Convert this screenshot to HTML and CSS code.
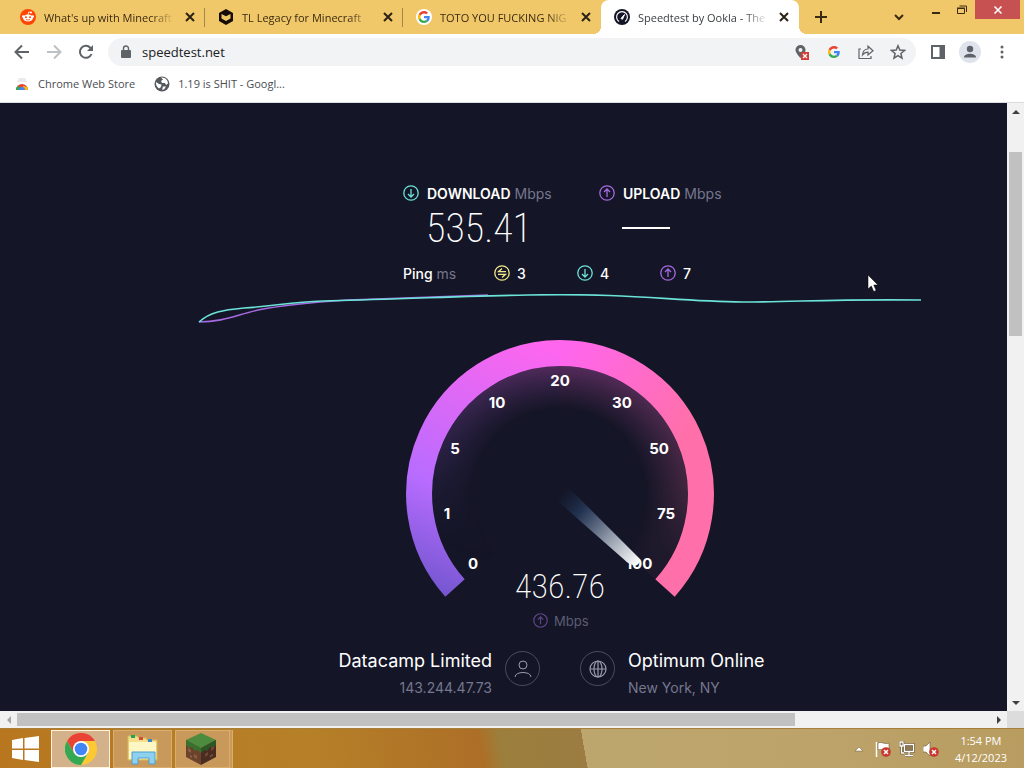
FILE: index.html
```
<!DOCTYPE html>
<html lang="en">
<head>
    <meta charset="UTF-8">
    <meta name="viewport" content="width=device-width, initial-scale=1.0">
    <title>Speedtest by Ookla</title>
    <link rel="stylesheet" href="styles.css">
</head>
<body>
    <!-- Shared icons -->
    <svg class="sprite" aria-hidden="true">
        <symbol id="i-close" viewBox="0 0 16 16"><path d="M4 4l8 8M12 4l-8 8" stroke="currentColor" stroke-width="2" fill="none"/></symbol>
        <symbol id="i-google" viewBox="0 0 48 48">
            <path fill="#ea4335" d="M24 9.500c3.500 0 6.700 1.200 9.200 3.600l6.900-6.900C35.900 2.400 30.500 0 24 0 14.600 0 6.500 5.400 2.600 13.200l8 6.200C12.400 13.700 17.700 9.500 24 9.500z"/>
            <path fill="#4285f4" d="M47 24.500c0-1.600-.2-3.100-.4-4.500H24v9h12.900c-.6 3-2.200 5.500-4.800 7.200l7.700 6C44.400 38 47 31.800 47 24.500z"/>
            <path fill="#fbbc05" d="M10.500 28.600A14.500 14.500 0 0 1 10.500 19.400l-8-6.200a24 24 0 0 0 0 21.600z"/>
            <path fill="#34a853" d="M24 48c6.500 0 11.900-2.100 15.900-5.800l-7.700-6c-2.200 1.500-4.900 2.300-8.200 2.300-6.300 0-11.600-4.200-13.500-9.900l-8 6.200C6.500 42.600 14.600 48 24 48z"/>
        </symbol>
        <symbol id="i-down" viewBox="0 0 16 16"><g fill="none" stroke="currentColor" stroke-width="1.300"><circle cx="8" cy="8" r="7.200"/><path d="M8 4v8M5 9l3 3 3-3"/></g></symbol>
        <symbol id="i-up" viewBox="0 0 16 16"><g fill="none" stroke="currentColor" stroke-width="1.300"><circle cx="8" cy="8" r="7.200"/><path d="M8 12V4M5 7l3-3 3 3"/></g></symbol>
        <symbol id="i-idle" viewBox="0 0 16 16"><g fill="none" stroke="currentColor" stroke-width="1.300"><circle cx="8" cy="8" r="7.200"/><path d="M12 6.700H4.500L8 3.500M4 9.300h7.500L8 12.500"/></g></symbol>
        <symbol id="i-error" viewBox="0 0 10 10"><circle cx="5" cy="5" r="4.800" fill="#c9372c"/><path d="M3 3l4 4M7 3L3 7" stroke="#fff" stroke-width="1.500"/></symbol>
    </svg>

    <!-- Tab strip -->
    <header class="tab-strip">
        <div class="tab">
            <svg class="icon" viewBox="0 0 16 16"><circle cx="8" cy="8" r="8" fill="#ff4500"/><ellipse cx="8" cy="9" rx="5" ry="3.500" fill="#fff"/><circle cx="3.300" cy="7.600" r="1.300" fill="#fff"/><circle cx="12.700" cy="7.600" r="1.300" fill="#fff"/><circle cx="11" cy="3.500" r="1" fill="#fff"/><path d="M8 6l.6-3 2.400.5" stroke="#fff" stroke-width=".8" fill="none"/><circle cx="6" cy="8.300" r="1" fill="#ff4500"/><circle cx="10" cy="8.300" r="1" fill="#ff4500"/><path d="M6 10.500q2 1.200 4 0" stroke="#ff4500" stroke-width=".8" fill="none"/></svg>
            <span class="tab-title">What's up with Minecraft</span>
            <button class="tab-close" aria-label="Close tab"><svg class="icon"><use href="#i-close"/></svg></button>
        </div>
        <div class="tab">
            <svg class="icon" viewBox="0 0 16 16"><path fill="#170d08" d="M8 0l7 4v8l-7 4-7-4V4z"/><path fill="#f0c765" d="M3.500 5L8 7.300 12.500 5v4.500L8 12l-4.500-2.500z"/></svg>
            <span class="tab-title">TL Legacy for Minecraft</span>
            <button class="tab-close" aria-label="Close tab"><svg class="icon"><use href="#i-close"/></svg></button>
        </div>
        <div class="tab">
            <span class="icon google-badge"><svg viewBox="0 0 48 48"><use href="#i-google"/></svg></span>
            <span class="tab-title">TOTO YOU FUCKING NIG</span>
            <button class="tab-close" aria-label="Close tab"><svg class="icon"><use href="#i-close"/></svg></button>
        </div>
        <div class="tab active">
            <svg class="icon" viewBox="0 0 16 16"><circle cx="8" cy="8" r="8" fill="#141526"/><path d="M5 12.500A5.400 5.400 0 1 1 11 12.500" fill="none" stroke="#fff" stroke-width="1.200"/><path d="M7 9.500l3.500-4-2 4.700z" fill="#fff" stroke="#fff"/></svg>
            <span class="tab-title">Speedtest by Ookla - The</span>
            <button class="tab-close" aria-label="Close tab"><svg class="icon"><use href="#i-close"/></svg></button>
        </div>
        <button class="new-tab" aria-label="New tab"><svg class="icon" viewBox="0 0 16 16"><path d="M8 2v12M2 8h12" stroke="currentColor" stroke-width="2"/></svg></button>
        <div class="window-controls">
            <button class="search-tabs" aria-label="Search tabs"><svg class="icon" viewBox="0 0 16 16"><path d="M4 6l4 4 4-4" fill="none" stroke="currentColor" stroke-width="2"/></svg></button>
            <button aria-label="Minimize"><svg viewBox="0 0 12 12"><path d="M2 9h8" stroke="currentColor" stroke-width="2"/></svg></button>
            <button aria-label="Restore"><svg viewBox="0 0 12 12"><path d="M1.500 4.500h7v5h-7zM1 4h8M3.500 2h7v6" fill="none" stroke="currentColor"/></svg></button>
            <button class="window-close" aria-label="Close"><svg viewBox="0 0 12 12"><path d="M2.500 2.500l7 7M9.500 2.500l-7 7" stroke="currentColor" stroke-width="1.600"/></svg></button>
        </div>
    </header>

    <!-- Toolbar -->
    <nav class="toolbar">
        <button aria-label="Back"><svg class="icon" viewBox="0 0 16 16"><path d="M15 8H2M8 1.500L1.500 8 8 14.500" fill="none" stroke="currentColor" stroke-width="2"/></svg></button>
        <button class="disabled" aria-label="Forward"><svg class="icon" viewBox="0 0 16 16"><path d="M1 8h13M8 1.500L14.500 8 8 14.500" fill="none" stroke="currentColor" stroke-width="2"/></svg></button>
        <button aria-label="Reload"><svg class="icon" viewBox="0 0 16 16"><path d="M13.500 10A6 6 0 1 1 12.300 3.700L14 5.500" fill="none" stroke="currentColor" stroke-width="2"/><path d="M15 1v6H9z" fill="currentColor"/></svg></button>
        <div class="address">
            <svg class="icon" viewBox="0 0 16 16"><rect x="3" y="6" width="10" height="8" rx="1" fill="currentColor"/><path d="M5.500 7V4.500a2.500 2.500 0 0 1 5 0V7" fill="none" stroke="currentColor" stroke-width="1.400"/></svg>
            <input type="text" aria-label="Address" value="speedtest.net">
            <button aria-label="Location blocked"><svg class="icon" viewBox="0 0 16 16"><path d="M6.500 1a5 5 0 0 1 5 5c0 3-5 8-5 8s-5-5-5-8a5 5 0 0 1 5-5z" fill="#5f6368"/><circle cx="6.500" cy="6" r="2" fill="#f1f3f4"/><path d="M7 8h8v8H7z" fill="#d13c36"/><path d="M9 10l4 4M13 10l-4 4" stroke="#fff" stroke-width="1.300"/></svg></button>
            <button aria-label="Google"><svg class="icon google-small"><use href="#i-google"/></svg></button>
            <button aria-label="Share"><svg class="icon" viewBox="0 0 16 16"><path d="M3 5H1v9.500h12V12M4.500 11c.3-4 2-6 5.500-6V2.200L15 6.700 10 11V8.200c-2.500 0-4 .8-5.500 2.800z" fill="none" stroke="currentColor" stroke-width="1.200"/></svg></button>
            <button aria-label="Bookmark"><svg class="icon" viewBox="0 0 16 16"><path d="M8 1.800l1.800 4.300 4.700.4-3.600 3 1.100 4.600L8 11.700l-4 2.400 1.100-4.600-3.600-3 4.700-.4z" fill="none" stroke="currentColor" stroke-width="1.500"/></svg></button>
        </div>
        <button aria-label="Side panel"><svg class="icon" viewBox="0 0 16 16"><path d="M2 2h12v12H2z" fill="none" stroke="currentColor" stroke-width="2"/><path d="M9.500 2H14v12H9.500z" fill="currentColor"/></svg></button>
        <button class="profile" aria-label="Profile"><svg class="icon" viewBox="0 0 16 16"><circle cx="8" cy="5" r="3.200" fill="currentColor"/><path d="M2 13.500c0-5 12-5 12 0z" fill="currentColor"/></svg></button>
        <button aria-label="Menu"><svg class="icon" viewBox="0 0 16 16"><g fill="currentColor"><circle cx="8" cy="3" r="1.500"/><circle cx="8" cy="8" r="1.500"/><circle cx="8" cy="13" r="1.500"/></g></svg></button>
    </nav>
    <nav class="bookmarks">
        <a href="#"><svg class="icon" viewBox="0 0 16 16"><path d="M3 6l2-4h6l2 4z" fill="#e8eaed"/><path d="M2 14a6 6 0 0 1 12 0H2z" fill="#ea4335"/><path d="M2 14a6 6 0 0 1 2-4.500L8 14z" fill="#34a853"/><path d="M8 14l1-4 4.500 1 .5 3z" fill="#fbbc05"/><path d="M5 14a3 3 0 0 1 6 0z" fill="#4285f4"/></svg>Chrome Web Store</a>
        <a href="#"><svg class="icon" viewBox="0 0 16 16"><circle cx="8" cy="8" r="7.500" fill="#55595e"/><path d="M2 6l3 2 2.500.5-.5 2.500-2 1.500C3 11 1.500 9 2 6zM7 1.500l2 2-2 1.500 1 2h3l1 2 2-1.500C14 4 11 1 7 1.500zM9 10.500h3l-2 3H8z" fill="#fff"/></svg>1.19 is SHIT - Googl...</a>
    </nav>

    <!-- Page -->
    <div class="viewport">
        <main class="speedtest">
            <section class="results">
                <div class="result">
                    <h2><svg class="icon download"><use href="#i-down"/></svg>DOWNLOAD <small>Mbps</small></h2>
                    <p class="speed">535.41</p>
                </div>
                <div class="result">
                    <h2><svg class="icon upload"><use href="#i-up"/></svg>UPLOAD <small>Mbps</small></h2>
                    <p class="speed"><span class="pending"></span></p>
                </div>
            </section>
            <section class="pings">
                <span>Ping <small>ms</small></span>
                <span><svg class="icon idle"><use href="#i-idle"/></svg>3</span>
                <span><svg class="icon download"><use href="#i-down"/></svg>4</span>
                <span><svg class="icon upload"><use href="#i-up"/></svg>7</span>
            </section>
            <svg class="graph" viewBox="0 0 724 32" fill="none" stroke-width="1.600">
                <path stroke="#a56ae0" d="M1 28C25 28 38 21 60 16C90 10 120 8 150 6L290 1"/>
                <path stroke="#6be3d8" d="M1 28C12 18 25 16 46 14C80 12 90 8 125 7C200 5 270 2 330 1C440 -1 470 7 545 8C600 8 630 5 723 6"/>
            </svg>
            <svg class="gauge" viewBox="0 0 308 290">
                <defs>
                    <linearGradient id="arc-left" gradientUnits="userSpaceOnUse" x1="39" y1="258" x2="154" y2="10">
                        <stop offset="0" stop-color="#7356cf"/>
                        <stop offset=".36" stop-color="#b86cff"/>
                        <stop offset="1" stop-color="#ff66ee"/>
                    </linearGradient>
                    <linearGradient id="arc-right" gradientUnits="userSpaceOnUse" x1="154" y1="20" x2="280" y2="90">
                        <stop offset="0" stop-color="#ff66ee"/>
                        <stop offset="1" stop-color="#ff70aa"/>
                    </linearGradient>
                    <linearGradient id="glow-left" gradientUnits="userSpaceOnUse" x1="60" y1="215" x2="154" y2="20">
                        <stop offset="0" stop-color="#7356cf" stop-opacity="0"/>
                        <stop offset=".4" stop-color="#b86cff" stop-opacity=".5"/>
                        <stop offset="1" stop-color="#ff66ee"/>
                    </linearGradient>
                    <linearGradient id="glow-right" gradientUnits="userSpaceOnUse" x1="154" y1="20" x2="200" y2="230">
                        <stop offset="0" stop-color="#ff66ee"/>
                        <stop offset=".7" stop-color="#ff70aa" stop-opacity=".7"/>
                        <stop offset="1" stop-color="#ff70aa" stop-opacity=".2"/>
                    </linearGradient>
                    <radialGradient id="glow-fade" gradientUnits="userSpaceOnUse" cx="154" cy="154" r="128">
                        <stop offset=".66" stop-color="#000"/>
                        <stop offset="1" stop-color="#484848"/>
                    </radialGradient>
                    <mask id="glow-mask" maskUnits="userSpaceOnUse" x="0" y="0" width="308" height="290"><circle cx="154" cy="154" r="129" fill="url(#glow-fade)"/></mask>
                    <linearGradient id="needle" gradientUnits="userSpaceOnUse" x1="154" y1="154" x2="233" y2="224">
                        <stop offset="0" stop-color="#1d2d4a" stop-opacity="0"/>
                        <stop offset=".25" stop-color="#24395a" stop-opacity=".8"/>
                        <stop offset=".6" stop-color="#8a93a4"/>
                        <stop offset="1" stop-color="#fff"/>
                    </linearGradient>
                </defs>
                <g fill="none" stroke-width="46" mask="url(#glow-mask)">
                    <path stroke="url(#glow-left)" d="M76 224A105 105 0 0 1 154 49"/>
                    <path stroke="url(#glow-right)" d="M154 49A105 105 0 0 1 232 224"/>
                </g>
                <g fill="none" stroke-width="26">
                    <path stroke="url(#arc-left)" d="M49 248A141 141 0 0 1 155 13"/>
                    <path stroke="url(#arc-right)" d="M154 13A141 141 0 0 1 259 248"/>
                </g>
                <g class="ticks">
                    <text x="67" y="229">0</text>
                    <text x="41" y="179">1</text>
                    <text x="49" y="114">5</text>
                    <text x="91" y="68">10</text>
                    <text x="154" y="46">20</text>
                    <text x="216" y="68">30</text>
                    <text x="253" y="114">50</text>
                    <text x="260" y="179">75</text>
                    <text x="233" y="229">100</text>
                </g>
                <path d="M148 158L161 146L233 218Q235 224 229 226L222 223Z" fill="url(#needle)"/>
                <text class="reading" x="154" y="258">436.76</text>
                <g class="unit">
                    <use href="#i-up" x="127" y="273" width="15" height="15"/>
                    <text x="148" y="286">Mbps</text>
                </g>
            </svg>
            <section class="connection">
                <div class="party client">
                    <div>
                        <h3>Datacamp Limited</h3>
                        <p>143.244.47.73</p>
                    </div>
                    <span class="round"><svg viewBox="0 0 18 18"><g fill="none" stroke="currentColor"><circle cx="9" cy="5" r="4"/><path d="M1 17c0-6 16-6 16 0"/></g></svg></span>
                </div>
                <div class="party">
                    <span class="round"><svg viewBox="0 0 18 18"><g fill="none" stroke="currentColor" stroke-width="1.200"><circle cx="9" cy="9" r="8"/><ellipse cx="9" cy="9" rx="4" ry="8"/><path d="M9 1v16M1 9h16"/></g></svg></span>
                    <div>
                        <h3>Optimum Online</h3>
                        <p>New York, NY</p>
                    </div>
                </div>
            </section>
            <svg class="cursor" viewBox="0 0 12 19"><path d="M1 1v14l3.300-3 2.400 5.500 2.400-1L6.800 11H11z" fill="#fff" stroke="#000" stroke-width=".5"/></svg>
        </main>
        <div class="scroll-y">
            <button aria-label="Scroll up"><svg viewBox="0 0 8 8"><path d="M0 6h8L4 2z" fill="currentColor"/></svg></button>
            <div class="track"><div class="thumb"></div></div>
            <button aria-label="Scroll down"><svg viewBox="0 0 8 8"><path d="M0 2h8L4 6z" fill="currentColor"/></svg></button>
        </div>
    </div>
    <div class="scroll-x">
        <button class="disabled" aria-label="Scroll left"><svg viewBox="0 0 8 8"><path d="M6 0v8L2 4z" fill="currentColor"/></svg></button>
        <div class="track"><div class="thumb"></div></div>
        <button aria-label="Scroll right"><svg viewBox="0 0 8 8"><path d="M2 0v8l4-4z" fill="currentColor"/></svg></button>
        <span class="corner"></span>
    </div>

    <!-- Taskbar -->
    <footer class="taskbar">
        <button class="start" aria-label="Start"><svg viewBox="0 0 28 26"><path fill="#fff" d="M0 4l11-2v10.500H0zM12.500 2L27 0v12.500H12.500zM0 14h11v10L0 22zM12.500 14H27v12l-14.500-2z"/></svg></button>
        <button class="task current" aria-label="Google Chrome"><svg viewBox="0 0 32 32"><circle cx="16" cy="16" r="16" fill="#fcc934"/><path fill="#ea4335" d="M2.100 8A16 16 0 0 1 29.900 8H16l-7 12z"/><path fill="#34a853" d="M2.100 8A16 16 0 0 0 16 32l7-12-7 2-7-2z"/><circle cx="16" cy="16" r="8" fill="#fff"/><circle cx="16" cy="16" r="6.300" fill="#4285f4"/></svg></button>
        <button class="task" aria-label="File Explorer"><svg viewBox="0 0 32 32"><path fill="#f4df8c" stroke="#d6b95a" d="M1 27V3h9l2 2h7l1 2h10v20z"/><path fill="#fff6c6" d="M2 9h27v17H2z"/><path fill="#25a35a" d="M4 2h4v3H4z"/><path fill="#d84a35" d="M12 4h4v3h-4z"/><path fill="#3a88c8" d="M21 6h4v3h-4z"/><path fill="#8fd0ee" stroke="#4aa0d0" d="M5 31V19h23v12h-6v-6H11v6z"/></svg></button>
        <button class="task stacked" aria-label="Minecraft"><svg viewBox="0 0 32 32"><path fill="#4d8b3e" d="M16 0l15 7-15 8L1 7z"/><path fill="#6b432d" d="M1 7l15 8v17L1 24z"/><path fill="#4a2d20" d="M31 7l-15 8v17l15-8z"/><path fill="#39702f" d="M1 7l15 8v5l-3-3-3 1-3-4-3 1-3-3z"/><path fill="#2c5826" d="M31 7l-15 8v5l3-3 3 1 3-4 3 1 3-3z"/><path fill="#8a6147" d="M3 15l3 2v3l-3-2zM9 21l3 2v3l-3-2zM5 22l2 1v2l-2-1z"/><path fill="#6d4a35" d="M20 21l3-2v3l-3 2zM26 15l3-2v3l-3 2zM25 22l3-1v2l-3 2z"/></svg></button>
        <div class="tray">
            <svg class="arrow" viewBox="0 0 8 8"><path d="M0 6h8L4 2z" fill="#fff" stroke="#6b5836" stroke-width=".5"/></svg>
            <svg class="icon" viewBox="0 0 16 16"><path d="M1.500 1v15" stroke="#fff" stroke-width="1.500"/><path d="M3 2c4-2 6 2 11 0v7c-5 2-7-2-11 0z" fill="#fff" stroke="#6b5836" stroke-width=".6"/><use href="#i-error" x="6" y="6" width="10" height="10"/></svg>
            <svg class="icon" viewBox="0 0 16 16"><path d="M5.500 3.500h9v7h-9z" fill="#8d7a55"/><path d="M5.500 3.500h9v7h-9zM10 11v3M6 14.500h8M1 1h3v4H1zM2.500 5v7H5" fill="none" stroke="#5c4a2c" stroke-width="2.400"/><path d="M5.500 3.500h9v7h-9zM10 11v3M6 14.500h8M1 1h3v4H1zM2.500 5v7H5" fill="none" stroke="#fff" stroke-width="1.300"/></svg>
            <svg class="icon" viewBox="0 0 16 16"><path d="M0 5h3l4-4v14l-4-4H0z" fill="#fff" stroke="#6b5836" stroke-width=".6"/><use href="#i-error" x="6" y="6" width="10" height="10"/></svg>
            <div class="clock"><span>1:54 PM</span><span>4/12/2023</span></div>
        </div>
    </footer>
</body>
</html>
```
FILE: styles.css
```
* {
    box-sizing: border-box;
}
body {
    margin: 0;
    height: 100vh;
    display: flex;
    flex-direction: column;
    overflow: hidden;
    font-family: "Open Sans", "Noto Sans", sans-serif;
    font-size: 11px;
    color: #3c4043;
    background-color: #fff;
}
button {
    display: flex;
    align-items: center;
    justify-content: center;
    padding: 0;
    border: none;
    background: none;
    color: inherit;
    font: inherit;
}
h2, h3, p {
    margin: 0;
}
.sprite {
    display: none;
}
.icon {
    width: 16px;
    height: 16px;
    flex: none;
}

/* Tab strip */
.tab-strip {
    display: flex;
    height: 34px;
    flex: none;
    padding-left: 7px;
    background-color: #f0c869;
    color: #3b2a12;
}
.tab {
    position: relative;
    display: flex;
    align-items: center;
    flex: 0 1 198px;
    min-width: 0;
    padding: 0 7px 0 13px;
    gap: 8px;
}
.tab:not(.active)::after {
    content: "";
    position: absolute;
    right: 0;
    top: 8px;
    height: 19px;
    border-right: 1px solid #a58644;
}
.tab:nth-child(3)::after {
    display: none;
}
.tab.active {
    background-color: #fff;
    border-radius: 8px 8px 0 0;
    color: #3c4043;
}
.tab.active::before,
.tab.active::after {
    content: "";
    position: absolute;
    bottom: 0;
    width: 8px;
    height: 8px;
}
.tab.active::before {
    left: -8px;
    background: radial-gradient(circle at 0 0, transparent 8px, #fff 8px);
}
.tab.active::after {
    right: -8px;
    background: radial-gradient(circle at 100% 0, transparent 8px, #fff 8px);
}
.tab-title {
    flex: 1;
    white-space: nowrap;
    -webkit-mask-image: linear-gradient(to right, #000 82%, transparent);
    mask-image: linear-gradient(to right, #000 82%, transparent);
}
.tab-close {
    color: #2b2216;
}
.google-badge {
    display: flex;
    align-items: center;
    justify-content: center;
    border-radius: 50%;
    background-color: #fff;
}
.google-badge svg {
    width: 12px;
    height: 12px;
}
.new-tab {
    width: 44px;
}
.window-controls {
    display: flex;
    margin-left: auto;
    padding-right: 4px;
    align-items: flex-start;
}
.window-controls button {
    width: 26px;
    height: 19px;
}
.window-controls svg {
    width: 12px;
    height: 12px;
}
.window-controls .search-tabs {
    width: 48px;
    height: 34px;
}
.window-controls .search-tabs svg {
    width: 16px;
    height: 16px;
}
.window-controls .window-close {
    width: 45px;
    background-color: #c75050;
    color: #fff;
}

/* Toolbar */
.toolbar {
    display: flex;
    align-items: center;
    height: 36px;
    flex: none;
    padding: 0 6px;
    color: #5f6368;
}
.toolbar button {
    width: 32px;
    height: 28px;
}
.toolbar .disabled {
    color: #bdc1c6;
}
.address {
    flex: 1;
    display: flex;
    align-items: center;
    height: 28px;
    margin: 0 6px;
    padding: 0 2px 0 10px;
    border-radius: 14px;
    background-color: #f1f3f4;
}
.address input {
    flex: 1;
    min-width: 0;
    padding: 0 8px;
    border: none;
    outline: none;
    background: none;
    color: #202124;
    font-family: inherit;
    font-size: 13px;
}
.google-small {
    width: 12px;
    height: 12px;
}
.toolbar .profile {
    width: 22px;
    height: 22px;
    margin: 0 5px;
    border-radius: 50%;
    background-color: #dfe3ec;
}
.bookmarks {
    display: flex;
    gap: 19px;
    height: 33px;
    flex: none;
    padding: 0 14px 5px;
    border-bottom: 1px solid #dadce0;
}
.bookmarks a {
    display: flex;
    align-items: center;
    gap: 8px;
    color: #4a4d51;
    text-decoration: none;
}

/* Page */
.viewport {
    flex: 1;
    min-height: 0;
    display: flex;
}
.speedtest {
    position: relative;
    flex: 1;
    min-width: 0;
    overflow: hidden;
    display: flex;
    flex-direction: column;
    align-items: center;
    padding: 80px 0 0 113px;
    background-color: #141526;
    color: #fff;
    font-family: "Inter", sans-serif;
}
.results {
    display: grid;
    grid-template-columns: 196px 118px;
}
.result h2 {
    display: flex;
    align-items: center;
    height: 20px;
    font-size: 14px;
    font-weight: 600;
    white-space: nowrap;
}
.result h2 .icon {
    margin-right: 8px;
}
small {
    margin-left: 4px;
    color: #75778e;
    font-size: 14px;
    font-weight: 400;
}
.speed {
    display: flex;
    align-items: center;
    height: 50px;
    padding-left: 23px;
    font-family: "Roboto Condensed", "Roboto", sans-serif;
    font-size: 40px;
    font-weight: 200;
}
.pending {
    width: 48px;
    height: 2px;
    background-color: #fff;
}
.download {
    color: #6be3d8;
}
.upload {
    color: #a56ae0;
}
.idle {
    color: #f1e98a;
}
.pings {
    display: grid;
    grid-template-columns: 91px 83px 83px 57px;
    margin-top: 10px;
    height: 20px;
    font-size: 14px;
    font-weight: 500;
}
.pings span {
    display: flex;
    align-items: center;
}
.pings .icon {
    margin-right: 7px;
}
.graph {
    width: 100%;
    max-width: 724px;
    height: 32px;
    flex: none;
    margin-top: 11px;
}
.gauge {
    width: 308px;
    height: 290px;
    flex: none;
    margin-top: 14px;
    overflow: visible;
}
.ticks {
    fill: #fff;
    font-size: 15px;
    font-weight: 700;
    text-anchor: middle;
}
.reading {
    fill: #fff;
    font-family: "Roboto Condensed", "Roboto", sans-serif;
    font-size: 34px;
    font-weight: 200;
    text-anchor: middle;
}
.unit {
    color: #5d4585;
    fill: #5b5d73;
    font-size: 13px;
}
.connection {
    display: grid;
    grid-template-columns: 1fr 1fr;
    gap: 40px;
    margin-top: 20px;
}
.party {
    display: flex;
    gap: 13px;
}
.client {
    justify-content: flex-end;
    text-align: right;
}
.party h3 {
    font-size: 18px;
    font-weight: 400;
    line-height: 22px;
}
.party p {
    margin-top: 6px;
    color: #75778e;
    font-size: 14px;
    line-height: 20px;
}
.round {
    display: flex;
    align-items: center;
    justify-content: center;
    width: 35px;
    height: 35px;
    margin-top: 1px;
    border: 1px solid #4b4d60;
    border-radius: 50%;
    color: #9a9cad;
}
.round svg {
    width: 18px;
    height: 18px;
}
.cursor {
    position: absolute;
    left: 867px;
    top: 171px;
    width: 12px;
    height: 19px;
}

/* Scrollbars */
.scroll-y,
.scroll-x {
    display: flex;
    flex: none;
    background-color: #f1f1f1;
    color: #404040;
}
.scroll-y {
    flex-direction: column;
    width: 17px;
    padding: 0 2px 0 2px;
}
.scroll-x {
    height: 17px;
}
.scroll-y button,
.scroll-x button {
    width: 17px;
    height: 17px;
}
.scroll-y button {
    width: 100%;
}
.scroll-y svg,
.scroll-x svg {
    width: 8px;
    height: 8px;
}
.scroll-x .disabled {
    color: #a3a3a3;
}
.track {
    flex: 1;
    display: flex;
}
.scroll-y .track {
    flex-direction: column;
    padding-top: 32px;
}
.thumb {
    background-color: #c1c1c1;
}
.scroll-y .thumb {
    height: 34%;
}
.scroll-x .thumb {
    width: 80%;
    margin: 2px 0;
}
.corner {
    width: 17px;
    background-color: #dcdcdc;
}

/* Taskbar */
.taskbar {
    display: flex;
    align-items: center;
    height: 40px;
    flex: none;
    border-top: 1px solid #a87f3a;
    background: linear-gradient(80deg, #b8771f 0%, #b68028 30%, #ad6f27 47%, #9c7f3c 49%, #9c7c42 57%, #bca66e 57%, #bda36a 80%, #b89c60 100%);
}
.start {
    width: 51px;
}
.start svg {
    width: 28px;
    height: 26px;
}
.task {
    width: 59px;
    height: 38px;
    margin-right: 3px;
    border: 1px solid #d9ae6c;
    background-color: #c8995a;
}
.task.current {
    border: 1px solid #fff3dc;
    background-color: #d3b18a;
}
.task.stacked {
    width: 58px;
    padding-right: 4px;
    border-right: 4px double #d9ae6c;
}
.task svg {
    width: 32px;
    height: 32px;
}
.tray {
    display: flex;
    align-items: center;
    gap: 8px;
    margin-left: auto;
    padding-right: 17px;
    color: #fff;
}
.tray .arrow {
    width: 8px;
    height: 8px;
    margin-right: 4px;
}
.clock {
    display: flex;
    flex-direction: column;
    align-items: center;
    margin-left: 8px;
    font-size: 11px;
    line-height: 17px;
}
```
